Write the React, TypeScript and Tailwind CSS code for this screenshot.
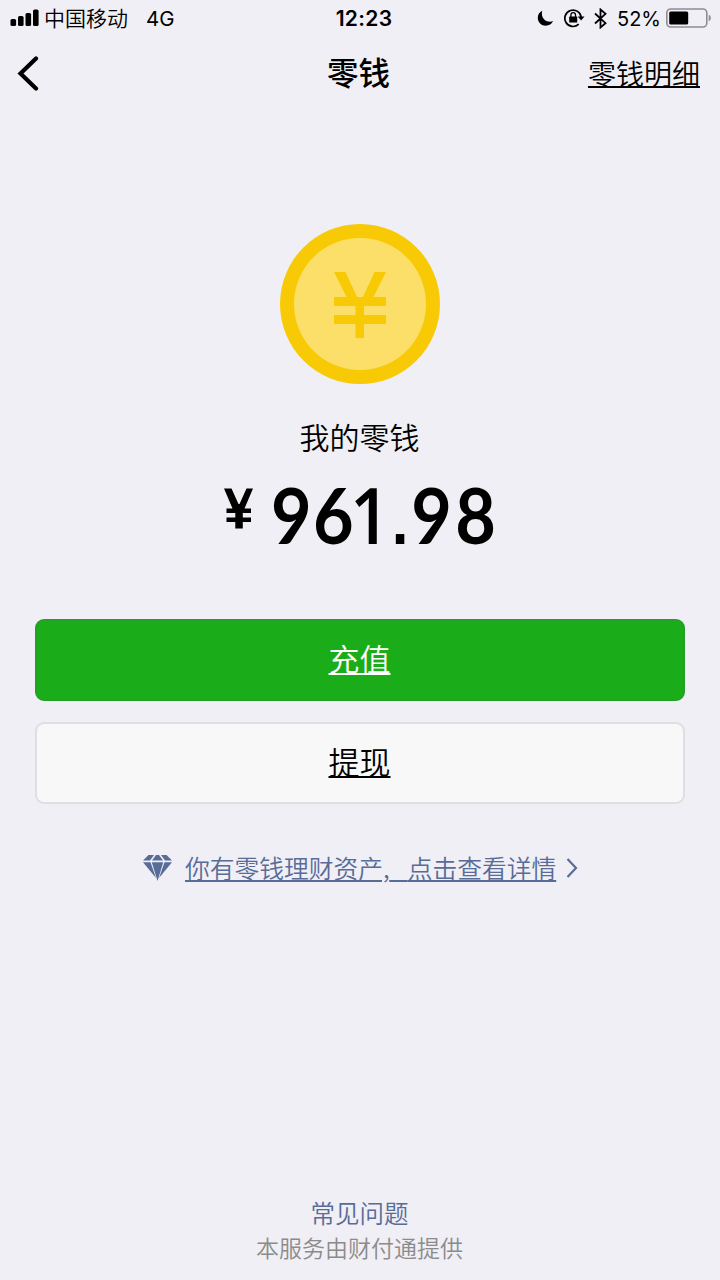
function StatusBar() {
  return (
    <div className="flex h-9 items-center justify-between pl-[10px] pr-[8px] font-['Inter','Noto_Sans_CJK_SC',sans-serif] text-black">
      <div className="flex w-[240px] items-center">
        <svg width="29" height="18" viewBox="0 0 29 18" className="shrink-0">
          <rect x="0.5" y="10" width="5.6" height="7" rx="1.6" />
          <rect x="8" y="7" width="5.6" height="10" rx="1.6" />
          <rect x="15.5" y="4" width="5.6" height="13" rx="1.6" />
          <rect x="23" y="0.5" width="5.6" height="16.5" rx="1.6" />
        </svg>
        <span className="-mt-[2px] ml-[5px] text-[21px] leading-9 font-[350] font-['Noto_Sans_CJK_SC',sans-serif]">中国移动</span>
        <span className="ml-[18px] mt-[1px] text-[20.5px] leading-9">4G</span>
      </div>
      <span className="ml-[6px] mt-[1px] text-[21px] leading-9 font-semibold tracking-[0.3px]">12:23</span>
      <div className="flex w-[240px] items-center justify-end">
        <svg width="17" height="17" viewBox="0 0 17 17" className="shrink-0">
          <path d="M5.3 0.8C2.5 2 0.8 4.7 0.8 7.8c0 4.6 3.6 8 8 8 3.3 0 6-1.9 7.3-4.7-1 .4-2 .6-3 .6-4.6 0-8.2-3.5-8.2-8 0-1 .1-2 .4-2.9z" />
        </svg>
        <svg width="21" height="20" viewBox="0 0 21 20" fill="none" stroke="#000" strokeWidth="1.7" className="ml-[10px] shrink-0">
          <path d="M14.7 16.2A8.2 8.2 0 1 1 17.2 9.5" />
          <path d="M13.7 8.4h6.8l-3.4 4.2z" fill="#000" stroke="none" />
          <rect x="5.2" y="8.6" width="8" height="6" rx="0.6" fill="#000" stroke="none" />
          <path d="M6.9 9V7a2.300 2.300 0 0 1 4.600 0v2" strokeWidth="1.3" />
        </svg>
        <svg width="13" height="21" viewBox="0 0 13 21" fill="none" stroke="#000" strokeWidth="1.8" className="ml-[9px] shrink-0">
          <path d="M1 5.500l10.500 9.700-5 4.300V1.500l5 4.300L1 15.500" />
        </svg>
        <span className="ml-[10px] mt-[1px] text-[20px] leading-9">52%</span>
        <svg width="46" height="20" viewBox="0 0 46 20" className="ml-[5px] shrink-0">
          <rect x="0.8" y="1" width="40" height="18" rx="4" fill="none" stroke="#8d8d92" strokeWidth="1.6" />
          <rect x="3.2" y="3.5" width="19" height="13" rx="1.5" />
          <path d="M42.7 6.700c2.800 1 2.800 5.600 0 6.600z" fill="#8d8d92" />
        </svg>
      </div>
    </div>
  )
}

function NavBar() {
  return (
    <div className="flex h-[74px] items-center justify-between pl-[17px] pr-5">
      <div className="flex w-[200px]">
        <svg width="22" height="35" viewBox="0 0 22 35" fill="none" stroke="#000" strokeWidth="4.2" strokeLinecap="round">
          <path d="M19 2.500L3.500 17.500 19 32.500" />
        </svg>
      </div>
      <h1 className="-mt-[5px] text-[31.5px] leading-[40px] font-medium">零钱</h1>
      <a className="w-[200px] text-right text-[28px] leading-[40px] font-[350] underline decoration-2 underline-offset-[1px]">零钱明细</a>
    </div>
  )
}

function Coin() {
  return (
    <svg width="160" height="160" viewBox="0 0 160 160">
      <circle cx="80" cy="80" r="80" fill="#f8ca05" />
      <circle cx="80" cy="80" r="66" fill="#fbdf68" />
      <path
        d="M54 48h11.500L77 73h6L94.500 48H106L93.500 73H106v9H84v9h22v9H84v14h-8.500v-14H54v-9h21.500v-9H54v-9h12.500z"
        fill="#f8ca05"
      />
    </svg>
  )
}

function Amount() {
  return (
    <div className="flex h-[58px] items-start text-black">
      <svg width="30" height="41" viewBox="0 0 30 41" className="mt-[1px] shrink-0">
        <path d="M0 0.500h7.500L14.500 16h1L22.500 0.500H29L20.500 20.500h6.500v4.500H18.800v4.500h8.200V34h-8.200v6.500h-7.500V34H2.500v-4.500h8.800V25H2.500v-4.500h6z" />
      </svg>
      <div className="ml-[17px] w-[225px]">
        {/* digits are slightly condensed */}
        <div className="-mt-[2px] flex w-[252px] origin-left scale-x-91 items-baseline text-[77px] leading-[58px] font-bold font-['Lato',sans-serif]">
          <span className="w-[46.2px] shrink-0">9</span>
          <span className="w-[40.5px] shrink-0">6</span>
          <span className="w-[45.9px] shrink-0 font-semibold font-['Open_Sans',sans-serif]">1</span>
          <span className="w-[21.5px] shrink-0 text-[66px] font-['Liberation_Sans',sans-serif]">.</span>
          <span className="w-[48.4px] shrink-0">9</span>
          <span className="shrink-0">8</span>
        </div>
      </div>
    </div>
  )
}

export default function App() {
  return (
    <div className="flex h-[1280px] w-[720px] flex-col overflow-hidden bg-[#efeff5] font-['Noto_Sans_CJK_SC',sans-serif] text-black">
      <StatusBar />
      <NavBar />

      <div className="mt-[114px] flex flex-col items-center">
        <Coin />
        <p className="mt-[31px] pr-[1px] text-[30px] leading-[42px] font-[350]">我的零钱</p>
        <div className="mt-[30px]">
          <Amount />
        </div>
      </div>

      <div className="mt-[74px] flex flex-col gap-[21px] px-[35px]">
        <button className="h-[82px] rounded-[9px] border-2 border-[#23a127] bg-[#1bad19] pb-[3px] pr-[1px] text-[31px] font-[350] text-white underline decoration-2 underline-offset-[2px]">
          充值
        </button>
        <button className="h-[82px] rounded-[9px] border-2 border-[#dfdfe1] bg-[#f8f8f8] pb-[3px] pr-[1px] text-[31px] font-[350] underline decoration-2 underline-offset-[2px]">
          提现
        </button>
      </div>

      <div className="mt-[43px] flex h-[42px] items-center pl-[142px] text-[#586c98]">
        <svg width="31" height="28" viewBox="0 0 31 28" fill="currentColor">
          <path d="M6.500 1h5.500L8 6.500H1z" />
          <path d="M14 1h3l4 5.500H10z" />
          <path d="M19 1h5.500L30 6.500h-7z" />
          <path d="M1 8.300h7.500L14 24z" />
          <path d="M9.800 8.300h11.400L15.500 27z" />
          <path d="M22.500 8.300H30L17 24z" />
        </svg>
        <a className="-mt-[2px] ml-[12px] text-[24.75px] leading-[42px] font-[350] underline decoration-[1.5px] underline-offset-[2px]">
          你有零钱理财资产,<span className="tracking-[3.5px]">&nbsp;&nbsp;</span>点击查看详情
        </a>
        <svg width="12" height="20" viewBox="0 0 12 20" fill="none" stroke="currentColor" strokeWidth="2.2" className="ml-[10px]">
          <path d="M1.500 1L10 10l-8.500 9" />
        </svg>
      </div>

      <div className="mt-auto flex flex-col items-center pb-[16px] pr-[1px]">
        <a className="text-[24.5px] leading-[34px] font-[350] text-[#586c98]">常见问题</a>
        <p className="text-[23px] leading-[34px] font-[350] text-[#8b8b8b]">本服务由财付通提供</p>
      </div>
    </div>
  )
}
